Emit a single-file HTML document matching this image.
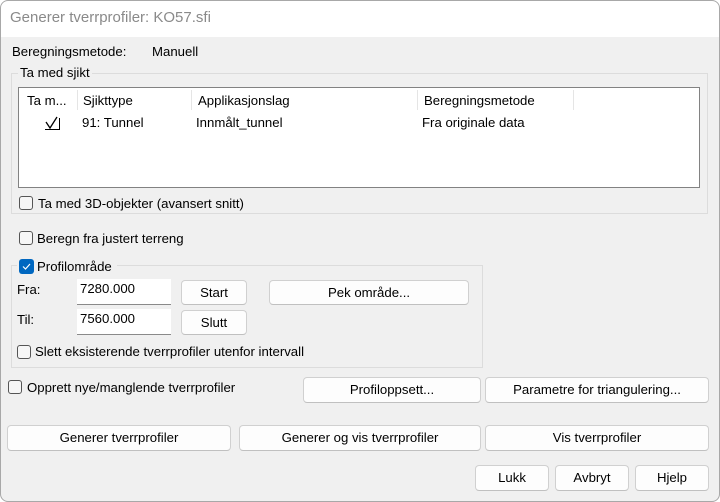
<!DOCTYPE html>
<html><head><meta charset="utf-8"><style>
*{box-sizing:border-box;margin:0;padding:0}
body{width:720px;height:502px;background:#fff;font-family:"Liberation Sans",sans-serif;font-size:13.2px;color:#000;position:relative;overflow:hidden}
.win{position:absolute;left:0;top:0;width:720px;height:502px;background:#f0f0f0;border-radius:8px;overflow:hidden}
.frame{position:absolute;left:0;top:0;width:720px;height:502px;border:1px solid #a8a8a8;border-radius:8px}
.title{position:absolute;left:0;top:0;width:720px;height:37px;background:#fff}
.a{position:absolute;white-space:nowrap}
.t{position:absolute;white-space:nowrap;line-height:16px}
.btn{position:absolute;background:#fdfdfd;border:1px solid #d0d0d0;border-bottom-color:#c0c0c0;border-radius:4px;text-align:center;line-height:23px}
.cb{position:absolute;width:14px;height:14px;border:1px solid #555;border-radius:3px;background:#f6f6f6}
.grp{position:absolute;border:1px solid #dcdcdc}
.lbl{position:absolute;background:#f0f0f0;padding:0 2px;line-height:16px}
.inp{position:absolute;background:#fff;border-bottom:1px solid #8a8a8a;padding:2px 0 0 3px;line-height:16px}
.sep{position:absolute;top:2px;width:1px;height:20px;background:#e5e5e5}
</style></head><body>
<div class="win">
<div class="title"></div>
<div class="t" style="left:10px;top:10px;font-size:15px;color:#8a8a8a">Generer tverrprofiler: KO57.sfi</div>
<div class="t" style="left:12px;top:44px">Beregningsmetode:</div>
<div class="t" style="left:152px;top:44px">Manuell</div>

<div class="grp" style="left:11px;top:73px;width:697px;height:141px"></div>
<div class="lbl" style="left:18px;top:65px">Ta med sjikt</div>
<div class="a" style="left:18px;top:87px;width:682px;height:101px;background:#fff;border:1px solid #828282">
 <div class="t" style="left:8px;top:5px">Ta m...</div>
 <div class="sep" style="left:58px"></div>
 <div class="t" style="left:64px;top:5px">Sjikttype</div>
 <div class="sep" style="left:172px"></div>
 <div class="t" style="left:179px;top:5px">Applikasjonslag</div>
 <div class="sep" style="left:398px"></div>
 <div class="t" style="left:405px;top:5px">Beregningsmetode</div>
 <div class="sep" style="left:554px"></div>
 <svg class="a" style="left:25px;top:27px" width="18" height="16"><path d="M2 7 L6 13 L13 2" fill="none" stroke="#000" stroke-width="1.3"/><path d="M1 14.5 H16 M15.5 14.5 V3" stroke="#000" stroke-width="1"/></svg>
 <div class="t" style="left:63px;top:27px">91: Tunnel</div>
 <div class="t" style="left:177px;top:27px">Innmålt_tunnel</div>
 <div class="t" style="left:403px;top:27px">Fra originale data</div>
</div>
<div class="cb" style="left:19px;top:196px"></div>
<div class="t" style="left:38px;top:196px">Ta med 3D-objekter (avansert snitt)</div>

<div class="cb" style="left:19px;top:231px"></div>
<div class="t" style="left:37px;top:231px">Beregn fra justert terreng</div>

<div class="grp" style="left:11px;top:265px;width:472px;height:103px"></div>
<div class="a" style="left:17px;top:257px;width:100px;height:18px;background:#f0f0f0"></div>
<div class="a" style="left:19px;top:259px;width:15px;height:15px;background:#0067c0;border-radius:3px"><svg width="15" height="15"><path d="M4 7.5 L6.5 10 L11 5" fill="none" stroke="#fff" stroke-width="1.2"/></svg></div>
<div class="t" style="left:37px;top:259px">Profilområde</div>

<div class="t" style="left:17px;top:282px">Fra:</div>
<div class="inp" style="left:77px;top:279px;width:94px;height:26px">7280.000</div>
<div class="btn" style="left:181px;top:280px;width:66px;height:25px">Start</div>
<div class="btn" style="left:269px;top:280px;width:200px;height:25px">Pek område...</div>
<div class="t" style="left:17px;top:312px">Til:</div>
<div class="inp" style="left:77px;top:309px;width:94px;height:26px">7560.000</div>
<div class="btn" style="left:181px;top:310px;width:66px;height:25px">Slutt</div>
<div class="cb" style="left:17px;top:345px"></div>
<div class="t" style="left:35px;top:344px">Slett eksisterende tverrprofiler utenfor intervall</div>

<div class="cb" style="left:8px;top:380px"></div>
<div class="t" style="left:27px;top:380px">Opprett nye/manglende tverrprofiler</div>
<div class="btn" style="left:303px;top:377px;width:178px;height:26px">Profiloppsett...</div>
<div class="btn" style="left:485px;top:377px;width:224px;height:26px">Parametre for triangulering...</div>

<div class="btn" style="left:7px;top:425px;width:224px;height:26px">Generer tverrprofiler</div>
<div class="btn" style="left:239px;top:425px;width:242px;height:26px">Generer og vis tverrprofiler</div>
<div class="btn" style="left:485px;top:425px;width:224px;height:26px">Vis tverrprofiler</div>

<div class="btn" style="left:475px;top:465px;width:74px;height:26px">Lukk</div>
<div class="btn" style="left:555px;top:465px;width:74px;height:26px">Avbryt</div>
<div class="btn" style="left:635px;top:465px;width:74px;height:26px">Hjelp</div>
</div>
<div class="frame"></div>
</body></html>
